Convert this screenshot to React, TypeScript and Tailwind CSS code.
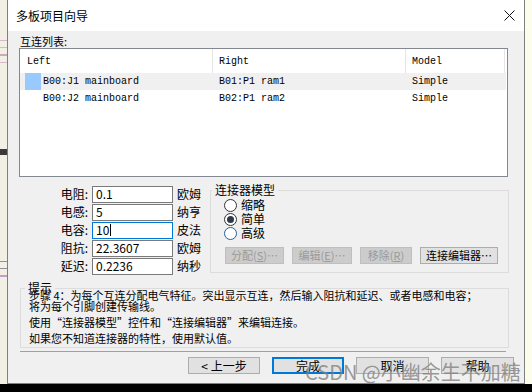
import React from 'react';

const ui = "font-['Noto_Sans_CJK_SC','Noto_Sans',sans-serif]";
const mono = "font-['Liberation_Mono','DejaVu_Sans_Mono',monospace]";

const rows = [
  { left: 'B00:J1 mainboard', right: 'B01:P1 ram1', model: 'Simple', selected: true },
  { left: 'B00:J2 mainboard', right: 'B02:P1 ram2', model: 'Simple', selected: false },
];

const fields = [
  { label: '电阻:', value: '0.1', unit: '欧姆' },
  { label: '电感:', value: '5', unit: '纳亨' },
  { label: '电容:', value: '10', unit: '皮法', focused: true },
  { label: '阻抗:', value: '22.3607', unit: '欧姆' },
  { label: '延迟:', value: '0.2236', unit: '纳秒' },
];

function Radio({ label, checked, hot }: { label: string; checked?: boolean; hot?: boolean }) {
  return (
    <div className="flex h-[14px] items-center gap-[4px]">
      <span
        className={
          'flex size-[13px] items-center justify-center rounded-full border bg-white ' +
          (hot ? 'border-[#1a5fa8]' : 'border-[#333333]')
        }
      >
        {checked && <span className="size-[7px] rounded-full bg-[#2b3a4a]" />}
      </span>
      <span className="text-[12px] leading-[14px]">{label}</span>
    </div>
  );
}

function GroupButton({ children, w, disabled }: { children: React.ReactNode; w: string; disabled?: boolean }) {
  return (
    <div
      className={
        'flex h-[17px] items-center justify-center border text-[11px] leading-none ' +
        w +
        (disabled
          ? ' border-[#bfbfbf] bg-[#cccccc] text-[#9a9a9a]'
          : ' border-[#adadad] bg-[#e1e1e1] text-black')
      }
    >
      {children}
    </div>
  );
}

function DialogButton({ children, w, primary }: { children: React.ReactNode; w: string; primary?: boolean }) {
  return (
    <div
      className={
        'flex h-[17px] items-center justify-center bg-[#e1e1e1] text-[12px] leading-none ' +
        w +
        (primary ? ' border-2 border-[#0078d7]' : ' border border-[#adadad]')
      }
    >
      {children}
    </div>
  );
}

export default function App() {
  return (
    <div className={`relative flex h-[392px] w-[532px] flex-col overflow-hidden bg-black text-black ${ui}`}>
      <div className="flex h-[384px]">
        {/* backdrop, left */}
        <div className="flex w-[7px] flex-col gap-[6px] bg-[#f2f0e4] pt-[40px]">
          <div className="h-px bg-[#d8b8c8]" />
          <div className="h-px bg-[#d8b8c8]" />
          <div className="h-[2px] bg-[#c9a9c0]" />
          <div className="h-px bg-[#d8b8c8]" />
          <div className="mt-[80px] h-[6px] bg-[#3a3a3a]" />
          <div className="mt-[100px] h-px bg-[#9090a0]" />
          <div className="h-px bg-[#9090a0]" />
          <div className="h-[2px] bg-[#c0a0c8]" />
        </div>

        {/* dialog */}
        <div className="flex w-[518px] flex-col border-x border-b border-[#7f7f7f] bg-[#f0f0f0]">
          <div className="flex h-[31px] items-center justify-between bg-white pl-[8px] pr-[9px]">
            <span className="text-[12px] leading-none">多板项目向导</span>
            <svg width="11" height="11" viewBox="0 0 11 11" className="mb-[1px]">
              <path d="M0.5 0.5 L10.5 10.5 M10.5 0.5 L0.5 10.5" stroke="#111" strokeWidth="1" />
            </svg>
          </div>

          <div className="mt-[3px] h-[14px] pl-[12px] text-[11px] leading-[14px]">互连列表:</div>

          {/* connection list */}
          <div className="ml-[11px] h-[129px] w-[489px] border border-[#828790] bg-white">
            <div className={`flex h-[24px] items-center text-[10px] ${mono}`}>
              <div className="w-[192px] pl-[7px]">Left</div>
              <div className="h-full w-px bg-[#e5e5e5]" />
              <div className="w-[192px] pl-[6px]">Right</div>
              <div className="h-full w-px bg-[#e5e5e5]" />
              <div className="w-[98px] pl-[6px]">Model</div>
              <div className="h-full w-px bg-[#e5e5e5]" />
            </div>
            {rows.map(r => (
              <div
                key={r.left}
                className={`flex h-[17px] w-[486px] items-center text-[10px] ${mono} ${r.selected ? 'bg-[#f0f0f0]' : ''}`}
              >
                <div className="flex h-full w-[193px] items-center">
                  <span className={`ml-[5px] h-full w-[16px] ${r.selected ? 'bg-[#99c9ff]' : ''}`} />
                  <span className="ml-[2px]">{r.left}</span>
                </div>
                <div className="w-[193px] pl-[6px]">{r.right}</div>
                <div className="w-[99px] pl-[6px]">{r.model}</div>
              </div>
            ))}
          </div>

          {/* electrical fields + connector model */}
          <div className="flex h-[104px]">
            <div className="ml-[44px] mt-[8px] flex flex-col">
              {fields.map(f => (
                <div key={f.label} className="flex h-[18px] items-center">
                  <span className="w-[36px] text-right text-[12px] leading-none">{f.label}</span>
                  <div
                    className={
                      'ml-[4px] flex h-[17px] w-[81px] items-center bg-white pl-[3px] text-[12px] leading-none ' +
                      (f.focused ? 'border border-[#0078d7]' : 'border border-[#7a7a7a]')
                    }
                  >
                    {f.value}
                    {f.focused && <span className="ml-px inline-block h-[12px] w-px bg-black" />}
                  </div>
                  <span className="ml-[4px] text-[12px] leading-none">{f.unit}</span>
                </div>
              ))}
            </div>

            <fieldset className="ml-auto mr-[15px] mt-[6px] h-[90px] w-[299px] border border-[#dcdcdc] p-0">
              <legend className="ml-px px-[3px] text-[12px] leading-[14px]">连接器模型</legend>
              <div className="flex flex-col pl-[13px] pt-px">
                <Radio label="缩略" />
                <Radio label="简单" checked />
                <Radio label="高级" hot />
                <div className="mt-[7px] flex gap-[8px] pl-px">
                  <GroupButton w="w-[59px]" disabled>
                    分配(<u>S</u>)…
                  </GroupButton>
                  <GroupButton w="w-[60px]" disabled>
                    编辑(<u>E</u>)…
                  </GroupButton>
                  <GroupButton w="w-[52px]" disabled>
                    移除(<u>R</u>)
                  </GroupButton>
                  <GroupButton w="w-[78px]">连接编辑器…</GroupButton>
                </div>
              </div>
            </fieldset>
          </div>

          {/* hint */}
          <fieldset className="ml-[12px] h-[67px] w-[489px] border border-[#dcdcdc] p-0">
            <legend className="ml-[4px] px-[3px] text-[12px] leading-[14px]">提示</legend>
            <div className="-mt-[5px] pl-[8px] text-[11px]">
              <div className="leading-[11px]">
                <div>步骤 4：为每个互连分配电气特征。突出显示互连，然后输入阻抗和延迟、或者电感和电容；</div>
                <div>将为每个引脚创建传输线。</div>
              </div>
              <div className="mt-[3px] leading-[14px]">
                使用“连接器模型”控件和“连接编辑器”来编辑连接。
              </div>
              <div className="mt-[2px] leading-[14px]">如果您不知道连接器的特性，使用默认值。</div>
            </div>
          </fieldset>

          <div className="ml-[12px] mt-[3px] h-px w-[486px] bg-[#a0a0a0]" />

          <div className="mt-[5px] flex justify-end gap-[12px] pr-[10px]">
            <DialogButton w="w-[72px]">&lt; 上一步</DialogButton>
            <DialogButton w="w-[72px]" primary>
              完成
            </DialogButton>
            <DialogButton w="w-[73px]">取消</DialogButton>
            <DialogButton w="w-[73px]">帮助</DialogButton>
          </div>
        </div>

        {/* backdrop, right */}
        <div className="flex-1 bg-[#fdfdec]" />
      </div>

      {/* watermark */}
      <div className="pointer-events-none absolute left-[305px] top-[360px] text-[20px] leading-[24px] text-[#808080]/80">
        CSDN @小幽余生不加糖
      </div>
    </div>
  );
}
